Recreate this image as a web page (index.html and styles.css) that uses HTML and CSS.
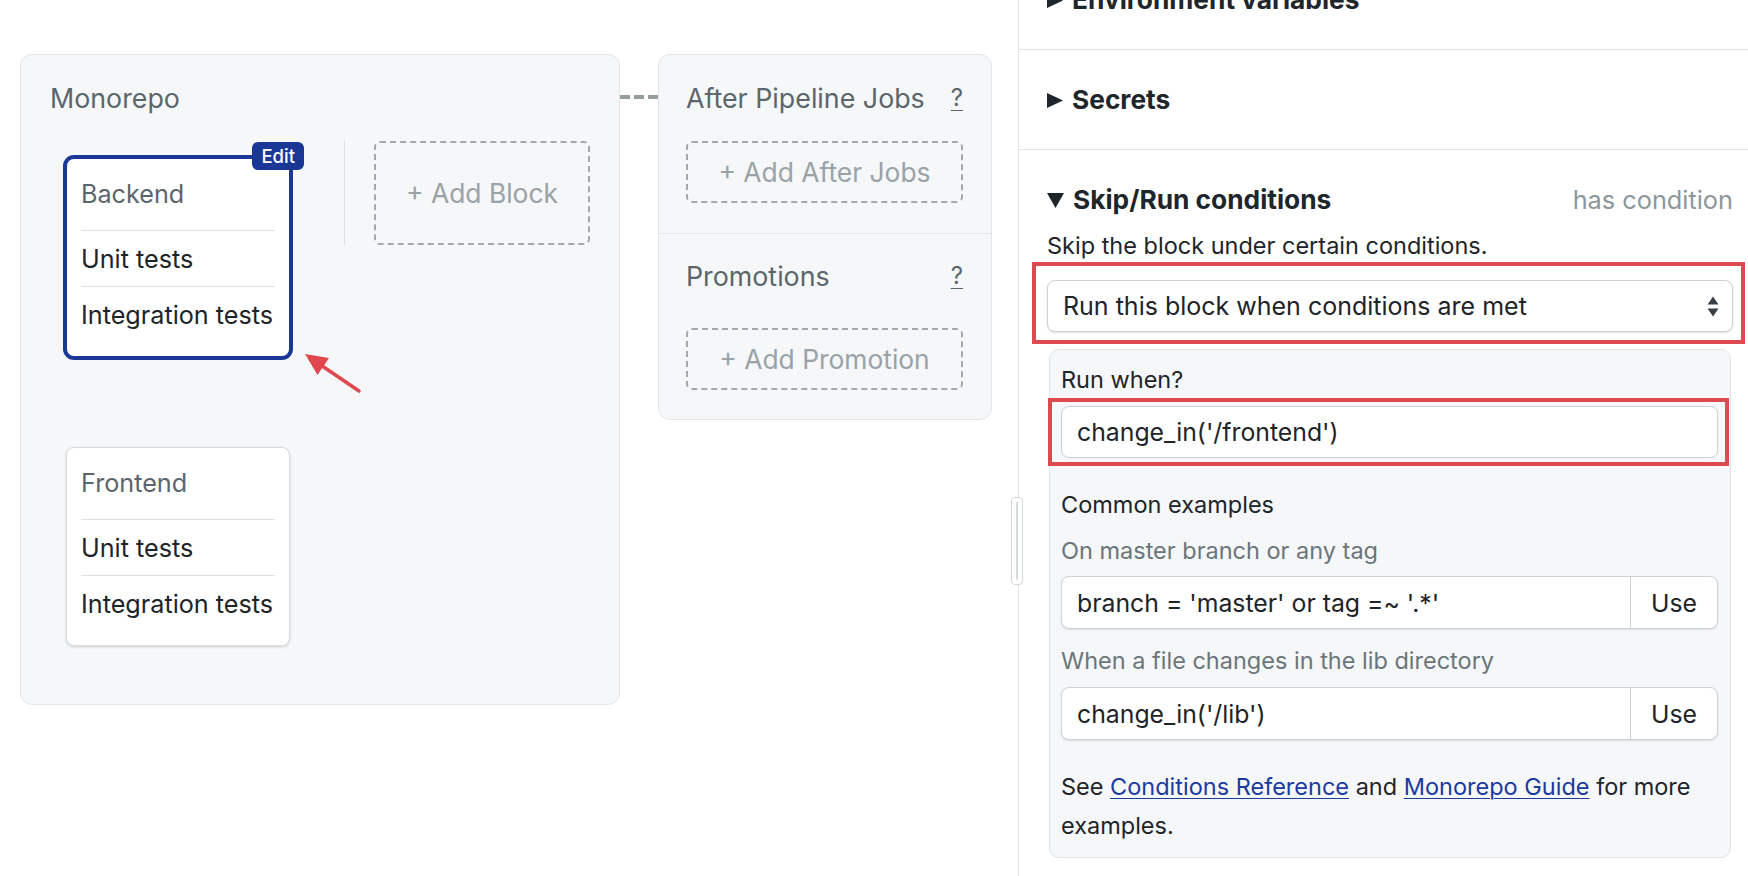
FILE: index.html
```html
<!DOCTYPE html>
<html lang="en">
<head>
<meta charset="utf-8">
<title>Workflow Editor</title>
<link rel="stylesheet" href="styles.css">
</head>
<body>
<div class="app">
  <main class="canvas">
    <div class="pipeline">
      <section class="stage">
        <h2 class="stage-title">Monorepo</h2>
        <div class="stage-body">
          <div class="blocks-col">
            <div class="block selected">
              <span class="edit-badge">Edit</span>
              <div class="block-title">Backend</div>
              <div class="job">Unit tests</div>
              <div class="job">Integration tests</div>
            </div>
            <div class="block">
              <div class="block-title">Frontend</div>
              <div class="job">Unit tests</div>
              <div class="job">Integration tests</div>
            </div>
          </div>
          <div class="col-divider"></div>
          <div class="add-box add-block">+ Add Block</div>
        </div>
        <svg class="note-arrow" width="80" height="60" viewBox="0 0 80 60">
          <line x1="68" y1="50" x2="29" y2="23.5" stroke="#e0474f" stroke-width="3.5" stroke-linecap="round"/>
          <polygon points="14,13 38,17 26.5,34" fill="#e0474f"/>
        </svg>
      </section>
      <div class="connector"></div>
      <section class="after">
        <div class="after-section">
          <div class="after-head"><span>After Pipeline Jobs</span><span class="help">?</span></div>
          <div class="add-box add-after">+ Add After Jobs</div>
        </div>
        <div class="after-section">
          <div class="after-head"><span>Promotions</span><span class="help">?</span></div>
          <div class="add-box add-promo">+ Add Promotion</div>
        </div>
      </section>
    </div>
  </main>

  <aside class="sidebar">
    <div class="resize-handle"><span></span></div>

    <div class="sec sec-collapsed sec-env">
      <div class="sec-title">
        <svg class="tri" width="16" height="15" viewBox="0 0 16 15"><polygon points="0,0 16,7.5 0,15" fill="#1f262b"/></svg>
        <span>Environment variables</span>
      </div>
    </div>

    <div class="sec sec-collapsed">
      <div class="sec-title">
        <svg class="tri" width="16" height="15" viewBox="0 0 16 15"><polygon points="0,0 16,7.5 0,15" fill="#1f262b"/></svg>
        <span>Secrets</span>
      </div>
    </div>

    <div class="sec sec-open">
      <div class="sec-head">
        <div class="sec-title">
          <svg class="tri" width="17" height="15" viewBox="0 0 17 15"><polygon points="0,0 17,0 8.5,15" fill="#1f262b"/></svg>
          <span>Skip/Run conditions</span>
        </div>
        <span class="sec-meta">has condition</span>
      </div>
      <p class="desc">Skip the block under certain conditions.</p>

      <div class="mark mark-select">
        <div class="select">
          <span>Run this block when conditions are met</span>
          <svg width="12" height="21" viewBox="0 0 12 21"><polygon points="6,0.5 11.5,8.5 0.5,8.5" fill="#394045"/><polygon points="0.5,12.5 11.5,12.5 6,20.5" fill="#394045"/></svg>
        </div>
      </div>

      <div class="cond-panel">
        <div class="label">Run when?</div>
        <div class="mark mark-input">
          <div class="input">change_in('/frontend')</div>
        </div>

        <div class="examples-title">Common examples</div>
        <div class="ex-label">On master branch or any tag</div>
        <div class="input-group">
          <div class="ig-text">branch = 'master' or tag =~ '.*'</div>
          <div class="ig-btn">Use</div>
        </div>
        <div class="ex-label ex-label-2">When a file changes in the lib directory</div>
        <div class="input-group ig-2">
          <div class="ig-text">change_in('/lib')</div>
          <div class="ig-btn">Use</div>
        </div>
        <p class="refs">See <a href="#">Conditions Reference</a> and <a href="#">Monorepo Guide</a> for more examples.</p>
      </div>
    </div>
  </aside>
</div>
</body>
</html>
```
FILE: styles.css
```css
* { box-sizing: border-box; }
html, body { margin: 0; padding: 0; }
body {
  font-family: Inter, "Liberation Sans", sans-serif;
  font-size: 23.5px;
  line-height: 34px;
  color: #1e2428;
  background: #ffffff;
  overflow: hidden;
}
.app { display: flex; height: 876px; }

/* ---------- canvas ---------- */
.canvas { flex: 0 0 1018px; padding: 54px 0 0 20px; }
.pipeline { display: flex; align-items: flex-start; }

.stage {
  position: relative;
  width: 600px;
  height: 651px;
  background: #f5f7f9;
  border: 1px solid #e3e6e9;
  border-radius: 12px;
  padding: 26px 29px 0;
}
.stage-title {
  margin: 0;
  font-size: 26.8px;
  font-weight: 400;
  line-height: 34px;
  color: #5b666c;
}
.stage-body { display: flex; align-items: flex-start; margin-top: 26px; }
.blocks-col {
  display: flex;
  flex-direction: column;
  gap: 90px;
  width: 224px;
  margin-left: 16px;
  padding-top: 17px;
}
.block {
  position: relative;
  background: #ffffff;
  border: 1px solid #d8dcdf;
  border-radius: 8px;
  box-shadow: 0 1px 3px rgba(0, 0, 0, 0.16);
  padding: 0 14px 14px;
  font-size: 25.2px;
}
.block.selected {
  border-color: #1b3796;
  box-shadow: 0 0 0 3px #1b3796;
}
.block-title { padding: 18px 0 19px; color: #5b666c; line-height: 34px; }
.job { border-top: 1px solid #dfe2e5; padding: 11px 0 10px; line-height: 34px; color: #1e2428; }
.edit-badge {
  position: absolute;
  top: -17px;
  right: -15px;
  background: #1b3796;
  color: #ffffff;
  font-size: 18.5px;
  font-weight: 500;
  line-height: 28px;
  padding: 0 9px;
  border-radius: 6px;
}
.col-divider { width: 1px; height: 104px; background: #dde0e3; margin-left: 54px; }

.add-box {
  border: 2px dashed #a3aaae;
  border-radius: 6px;
  color: #9aa2a7;
  font-size: 26.4px;
  display: flex;
  align-items: center;
  justify-content: center;
}
.add-block { width: 216px; height: 104px; margin-left: 29px; }

.note-arrow { position: absolute; left: 270px; top: 286px; }

.connector {
  width: 38px;
  height: 4px;
  margin-top: 41px;
  background: repeating-linear-gradient(90deg, #95a09c 0 10.5px, transparent 10.5px 14px);
}

.after {
  width: 334px;
  background: #f5f7f9;
  border: 1px solid #e3e6e9;
  border-radius: 12px;
}
.after-section { padding: 26px 28px 30px 27px; }
.after-section + .after-section { border-top: 1px solid #e3e6e9; padding: 25px 28px 29px 27px; }
.after-head {
  display: flex;
  justify-content: space-between;
  color: #5b666c;
  font-size: 26.8px;
  line-height: 34px;
}
.help { text-decoration: underline; text-underline-offset: 4px; text-decoration-thickness: 1px; font-size: 24px; }
.add-after { height: 62px; margin-top: 26px; }
.add-promo { height: 62px; margin-top: 35px; }

/* ---------- sidebar ---------- */
.sidebar { position: relative; flex: 1; border-left: 1px solid #e1e4e7; }
.resize-handle {
  position: absolute;
  left: -8px;
  top: 497px;
  width: 12px;
  height: 88px;
  background: #ffffff;
  border: 1px solid #d3d7da;
  border-radius: 4px;
  display: flex;
  justify-content: center;
  padding: 4px 0;
}
.resize-handle span { width: 2px; background: #d6dadd; border-radius: 1px; }

.sec { border-bottom: 1px solid #e1e4e7; padding: 0 15px 0 28px; }
.sec-collapsed { height: 100px; display: flex; align-items: center; padding-top: 1px; }
.sec-env { margin-top: -50px; }
.sec-title {
  display: flex;
  align-items: center;
  gap: 9px;
  font-size: 26.3px;
  font-weight: 700;
  line-height: 34px;
  color: #1f262b;
}
.tri { flex: none; }
.sec-open { border-bottom: none; padding-top: 33px; }
.sec-head { display: flex; justify-content: space-between; align-items: center; }
.sec-meta { color: #8d969b; font-size: 25.3px; line-height: 34px; }
.desc { margin: 12px 0 0; }

.mark { border: 4px solid #df4a50; }
.mark-select { margin: -1px -12px 0 -15px; padding: 14px 8px 8px 11px; }
.select {
  height: 52px;
  border: 1px solid #cdd2d6;
  border-radius: 8px;
  background: #ffffff;
  box-shadow: 0 1px 2px rgba(0, 0, 0, 0.12);
  display: flex;
  align-items: center;
  justify-content: space-between;
  padding: 0 13px 0 15px;
  font-size: 25px;
}

.cond-panel {
  margin: 5px 2px 0;
  background: #f5f7f9;
  border: 1px solid #e1e4e7;
  border-radius: 10px;
  padding: 13px 12px 12px 11px;
}
.label { line-height: 34px; }
.mark-input { margin: 1px -11px 0 -13px; padding: 4px 7px 4px 9px; }
.input {
  height: 52px;
  border: 1px solid #cdd2d6;
  border-radius: 8px;
  background: #ffffff;
  display: flex;
  align-items: center;
  padding: 0 15px;
  font-size: 24.8px;
}
.examples-title { margin-top: 22px; }
.ex-label { margin-top: 12px; color: #6b757a; }
.ex-label-2 { margin-top: 15px; }
.input-group {
  display: flex;
  height: 53px;
  margin-top: 8px;
  border: 1px solid #cdd2d6;
  border-radius: 8px;
  background: #ffffff;
  box-shadow: 0 1px 2px rgba(0, 0, 0, 0.1);
  font-size: 24.8px;
}
.ig-2 { margin-top: 9px; }
.ig-text { flex: 1; display: flex; align-items: center; padding: 0 15px; }
.ig-btn {
  flex: 0 0 87px;
  display: flex;
  align-items: center;
  justify-content: center;
  border-left: 1px solid #cdd2d6;
}
.refs { margin: 27px 0 0; line-height: 39px; }
.refs a { color: #1b3a9e; text-decoration: underline; text-underline-offset: 3px; text-decoration-thickness: 1px; }
```
